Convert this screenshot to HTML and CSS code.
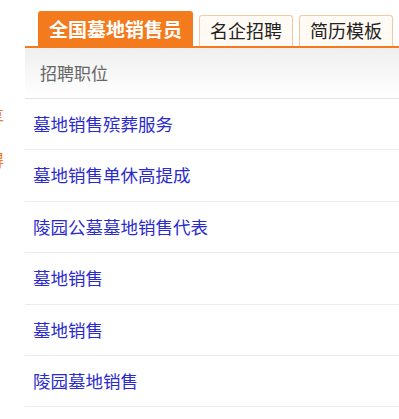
FILE: index.html
```html
<!DOCTYPE html>
<html lang="zh-CN">
<head>
    <meta charset="UTF-8">
    <meta name="viewport" content="width=device-width, initial-scale=1.0">
    <title>全国墓地销售员</title>
    <link rel="stylesheet" href="styles.css">
</head>
<body>
<div class="page">
    <!-- 左侧被裁掉的栏 -->
    <div class="side">
        <span class="side-word side-first">享</span>
        <span class="side-word">得</span>
    </div>

    <div class="main">
        <div class="tabs">
            <a class="tab tab-active" href="#">全国墓地销售员</a>
            <a class="tab" href="#">名企招聘</a>
            <a class="tab" href="#">简历模板</a>
        </div>
        <div class="list-head">招聘职位</div>
        <ul class="job-list">
            <li><a href="#">墓地销售殡葬服务</a></li>
            <li><a href="#">墓地销售单休高提成</a></li>
            <li><a href="#">陵园公墓墓地销售代表</a></li>
            <li><a href="#">墓地销售</a></li>
            <li><a href="#">墓地销售</a></li>
            <li><a href="#">陵园墓地销售</a></li>
        </ul>
    </div>
</div>
</body>
</html>
```

FILE: styles.css
```css
body {
    margin: 0;
    padding: 0;
    font-family: "Noto Sans CJK SC", "Noto Sans", sans-serif;
    background-color: #FFFFFF;
    overflow: hidden;
}

.page {
    display: flex;
}

/* Coluna esquerda cortada */
.side {
    width: 25px;
    flex-shrink: 0;
    overflow: hidden;
    display: flex;
    flex-direction: column;
}

.side-word {
    margin-left: -13px;
    font-size: 17px;
    line-height: 20px;
    color: #f37b1d;
}

.side-first {
    margin-top: 106px;
    margin-bottom: 24px;
}

.main {
    flex: 1;
    min-width: 0;
}

/* Abas */
.tabs {
    display: flex;
    align-items: flex-end;
    gap: 6px;
    height: 35px;
    padding: 11px 0 0 13px;
    border-bottom: 2px solid #f37b1d;
}

.tab {
    display: block;
    box-sizing: border-box;
    height: 31px;
    line-height: 29px;
    padding: 0 10px;
    font-size: 18px;
    color: #222;
    text-decoration: none;
    white-space: nowrap;
    background-color: #fffaf3;
    border: 1px solid #f7c9a3;
    border-bottom: none;
    border-radius: 3px 3px 0 0;
}

.tab-active {
    height: 35px;
    line-height: 35px;
    padding: 0 11px;
    font-size: 19px;
    font-weight: bold;
    color: #FFFFFF;
    background-color: #f37b1d;
    border: none;
}

.list-head {
    height: 50px;
    line-height: 50px;
    padding-left: 15px;
    font-size: 17px;
    color: #666;
    background: linear-gradient(#efefef, #ffffff);
    border-bottom: 1px solid #e3e3e3;
}

.job-list {
    list-style: none;
    margin: 0;
    padding: 0;
}

.job-list li {
    height: 50.4px;
    line-height: 50px;
    padding-left: 8px;
    border-bottom: 1px solid #ececec;
}

.job-list a {
    font-size: 17.5px;
    color: #2b2bcc;
    text-decoration: none;
}
```
